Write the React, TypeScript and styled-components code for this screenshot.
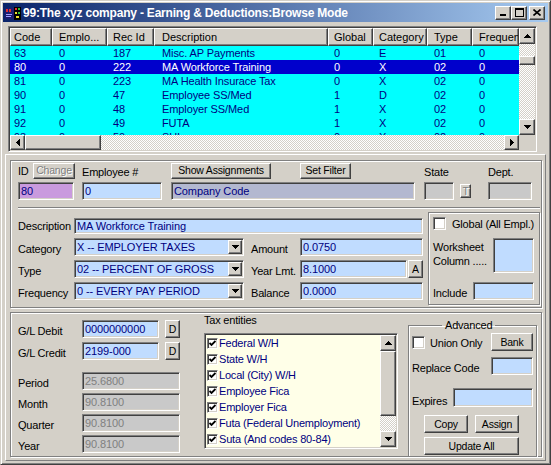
import styled, { createGlobalStyle, css } from "styled-components";

const FACE = "#d4d0c8";
const NAVY = "#000080";
const BLUE_FIELD = "#c0dcff";
const GREY_FIELD = "#c9c9c9";

const GlobalStyle = createGlobalStyle`
  html, body { margin: 0; padding: 0; background: #ffffff; }
  body { font-family: "Liberation Sans", Arial, sans-serif; font-size: 11px; color: #000; }
  *, *::before, *::after { box-sizing: border-box; }
`;

const raised = css`
  border: 1px solid;
  border-color: #ffffff #404040 #404040 #ffffff;
  box-shadow: inset -1px -1px #808080, inset 1px 1px ${FACE};
  background: ${FACE};
`;

const sunken = css`
  border: 1px solid;
  border-color: #808080 #ffffff #ffffff #808080;
  box-shadow: inset 1px 1px #404040, inset -1px -1px ${FACE};
`;

const etched = css`
  border: 1px solid #808080;
  box-shadow: inset 1px 1px #ffffff, 1px 1px #ffffff;
`;

const checker = css`
  background: repeating-conic-gradient(#ffffff 0 25%, ${FACE} 0 50%) 0 0 / 2px 2px;
`;

const Window = styled.div`
  width: 551px;
  height: 465px;
  background: ${FACE};
  border: 1px solid;
  border-color: ${FACE} #404040 #404040 ${FACE};
  box-shadow: inset 1px 1px #ffffff, inset -1px -1px #808080;
  padding: 2px;
  display: flex;
  flex-direction: column;
`;

const TitleBar = styled.div`
  height: 19px;
  flex-shrink: 0;
  background: linear-gradient(to right, #0a246a, #a6caf0);
  display: flex;
  align-items: center;
  padding: 0 3px 0 2px;
`;

const TitleText = styled.span`
  flex: 1;
  margin-left: 2px;
  color: #ffffff;
  font-weight: bold;
  font-size: 12px;
  letter-spacing: -0.2px;
  white-space: nowrap;
`;

const CaptionButton = styled.div<{ $ml?: number }>`
  ${raised}
  width: 16px;
  height: 14px;
  margin-left: ${(p) => p.$ml ?? 0}px;
  display: flex;
  align-items: center;
  justify-content: center;
`;

const GridFrame = styled.div`
  ${sunken}
  margin: 4px 0 0 5px;
  width: 529px;
  height: 126px;
  padding: 1px;
  display: grid;
  grid-template-columns: 509px 16px;
  grid-template-rows: 107px 15px;
`;

const Viewport = styled.div`
  overflow: hidden;
  background: #00ffff;
`;

const HeaderRow = styled.div`
  display: flex;
  height: 18px;
`;

const HeaderCell = styled.div<{ $w: number; $pad: number }>`
  ${raised}
  width: ${(p) => p.$w}px;
  flex-shrink: 0;
  padding-left: ${(p) => p.$pad - 1}px;
  line-height: 16px;
  font-size: 11px;
  white-space: nowrap;
  overflow: hidden;
`;

const DataRow = styled.div<{ $selected?: boolean }>`
  display: flex;
  height: 14px;
  background: ${(p) => (p.$selected ? "#0000cc" : "#00ffff")};
  color: ${(p) => (p.$selected ? "#ffffff" : NAVY)};
`;

const DataCell = styled.div<{ $w: number; $pad: number }>`
  width: ${(p) => p.$w}px;
  flex-shrink: 0;
  padding-left: ${(p) => p.$pad}px;
  line-height: 14px;
  font-size: 11px;
  letter-spacing: -0.1px;
  white-space: nowrap;
  overflow: hidden;
`;

const ScrollColumn = styled.div`
  display: flex;
  flex-direction: column;
`;

const ScrollRow = styled.div`
  display: flex;
`;

const ScrollButton = styled.div<{ $w: number; $h: number }>`
  ${raised}
  width: ${(p) => p.$w}px;
  height: ${(p) => p.$h}px;
  flex-shrink: 0;
  display: flex;
  align-items: center;
  justify-content: center;
`;

const Track = styled.div<{ $vertical?: boolean }>`
  ${checker}
  flex: 1;
  display: flex;
  flex-direction: ${(p) => (p.$vertical ? "column" : "row")};
`;

const Thumb = styled.div<{ $offset: number; $size: number; $vertical?: boolean }>`
  ${raised}
  flex-shrink: 0;
  ${(p) =>
    p.$vertical
      ? `margin-top: ${p.$offset}px; height: ${p.$size}px; width: 100%;`
      : `margin-left: ${p.$offset}px; width: ${p.$size}px; height: 100%;`}
`;

const Corner = styled.div`
  background: ${FACE};
`;

const FormArea = styled.div`
  margin: 2px 0 0 2px;
  width: 541px;
  height: 307px;
  border: 1px solid;
  border-color: #ffffff #808080 #808080 #ffffff;
  padding: 5px 0 0 4px;
`;

const Panel = styled.div<{ $h: number; $mt?: number }>`
  ${etched}
  width: 532px;
  height: ${(p) => p.$h}px;
  margin-top: ${(p) => p.$mt ?? 0}px;
  padding: 1px 0 0 7px;
`;

const BottomPanel = styled(Panel)`
  display: flex;
  align-items: flex-start;
  padding-top: 0;
`;

const TopRow = styled.div`
  display: flex;
  height: 38px;
`;

const Column = styled.div<{ $w: number; $ml?: number; $mt?: number }>`
  width: ${(p) => p.$w}px;
  margin-left: ${(p) => p.$ml ?? 0}px;
  margin-top: ${(p) => p.$mt ?? 0}px;
  flex-shrink: 0;
  display: flex;
  flex-direction: column;
`;

const ColumnHead = styled.div`
  height: 17px;
  margin-bottom: 3px;
  display: flex;
  align-items: center;
`;

const FieldRow = styled.div<{ $mt?: number; $h?: number }>`
  display: flex;
  align-items: center;
  margin-top: ${(p) => p.$mt ?? 0}px;
  height: ${(p) => p.$h ?? 18}px;
  flex-shrink: 0;
`;

const Label = styled.span<{ $w?: number; $ml?: number; $pt?: number; $top?: boolean }>`
  display: inline-block;
  flex-shrink: 0;
  align-self: ${(p) => (p.$top ? "flex-start" : "auto")};
  width: ${(p) => (p.$w ? `${p.$w}px` : "auto")};
  margin-left: ${(p) => p.$ml ?? 0}px;
  padding-top: ${(p) => p.$pt ?? 0}px;
  font-size: 11px;
  letter-spacing: -0.2px;
  line-height: 14px;
  white-space: nowrap;
`;

const Button = styled.button<{ $w: number; $h?: number; $ml?: number | "auto"; $disabled?: boolean }>`
  ${raised}
  width: ${(p) => p.$w}px;
  height: ${(p) => p.$h ?? 16}px;
  margin: 0 0 0 ${(p) => (p.$ml === "auto" ? "auto" : `${p.$ml ?? 0}px`)};
  padding: 0;
  flex-shrink: 0;
  font-family: inherit;
  font-size: 10.5px;
  letter-spacing: -0.2px;
  line-height: 1;
  color: ${(p) => (p.$disabled ? "#808080" : "#000000")};
  text-shadow: ${(p) => (p.$disabled ? "1px 1px #ffffff" : "none")};
  display: flex;
  align-items: center;
  justify-content: center;
  white-space: nowrap;
  cursor: default;
`;

const Field = styled.div<{ $w: number; $h?: number; $ml?: number | "auto"; $bg?: string; $fg?: string }>`
  ${sunken}
  width: ${(p) => p.$w}px;
  height: ${(p) => p.$h ?? 18}px;
  margin-left: ${(p) => (p.$ml === "auto" ? "auto" : `${p.$ml ?? 0}px`)};
  flex-shrink: 0;
  background: ${(p) => p.$bg ?? BLUE_FIELD};
  color: ${(p) => p.$fg ?? NAVY};
  padding: 0 2px;
  line-height: ${(p) => (p.$h ?? 18) - 2}px;
  font-size: 11px;
  letter-spacing: -0.1px;
  white-space: nowrap;
  overflow: hidden;
`;

const ComboBox = styled.div`
  ${sunken}
  width: 170px;
  height: 18px;
  flex-shrink: 0;
  background: ${BLUE_FIELD};
  padding: 1px;
  display: flex;
`;

const ComboText = styled.div`
  flex: 1;
  padding-left: 1px;
  color: ${NAVY};
  font-size: 11px;
  letter-spacing: -0.1px;
  line-height: 14px;
  white-space: nowrap;
  overflow: hidden;
`;

const DropButton = styled.div`
  ${raised}
  width: 14px;
  height: 14px;
  display: flex;
  align-items: center;
  justify-content: center;
`;

const Separator = styled.div`
  margin: 7px 1px 0 0;
  height: 2px;
  border-top: 1px solid #808080;
  border-bottom: 1px solid #ffffff;
`;

const LowerBlock = styled.div`
  display: flex;
  margin-top: 3px;
`;

const Form = styled.div`
  width: 405px;
  padding-top: 6px;
  display: flex;
  flex-direction: column;
  gap: 4px;
`;

const GlobalBox = styled.div`
  ${etched}
  width: 112px;
  height: 93px;
  margin-left: 5px;
  padding: 4px 5px 0 4px;
  display: flex;
  flex-direction: column;
`;

const CheckBox = styled.span<{ $size?: number }>`
  ${sunken}
  width: ${(p) => p.$size ?? 13}px;
  height: ${(p) => p.$size ?? 13}px;
  background: #ffffff;
  flex-shrink: 0;
  display: inline-flex;
  align-items: center;
  justify-content: center;
`;

const TaxLabel = styled.div`
  line-height: 13px;
  font-size: 11px;
  letter-spacing: -0.2px;
`;

const TaxList = styled.div`
  ${sunken}
  margin-top: 6px;
  width: 194px;
  height: 116px;
  background: #ffffe8;
  padding: 1px;
  display: flex;
`;

const TaxItems = styled.div`
  flex: 1;
  overflow: hidden;
`;

const TaxItem = styled.div`
  height: 16px;
  display: flex;
  align-items: center;
  padding-left: 1px;
  gap: 1px;
  color: ${NAVY};
  font-size: 11px;
  letter-spacing: -0.2px;
  white-space: nowrap;
`;

const Advanced = styled.fieldset`
  ${etched}
  margin: 6px 0 0 10px;
  padding: 0 3px 0 3px;
  width: 129px;
  height: 138px;
  min-width: 0;
  display: flex;
  flex-direction: column;
`;

const Legend = styled.legend`
  margin-left: 30px;
  padding: 0 3px;
  line-height: 13px;
  font-size: 11px;
  letter-spacing: -0.2px;
`;

type Dir = "up" | "down" | "left" | "right";

function Arrow({ dir }: { dir: Dir }) {
  const vertical = dir === "up" || dir === "down";
  const rects = [0, 1, 2, 3].map((i) => {
    const along = dir === "up" || dir === "left" ? i : 3 - i;
    return vertical
      ? { x: 3 - i, y: along, w: 2 * i + 1, h: 1 }
      : { x: along, y: 3 - i, w: 1, h: 2 * i + 1 };
  });
  return (
    <svg width={vertical ? 7 : 4} height={vertical ? 4 : 7} shapeRendering="crispEdges">
      {rects.map((r, i) => (
        <rect key={i} x={r.x} y={r.y} width={r.w} height={r.h} fill="#000" />
      ))}
    </svg>
  );
}

function CheckMark() {
  return (
    <svg width="7" height="7" viewBox="0 0 7 7">
      <path d="M0.5 3 L2.5 5 L6.5 1" stroke="#000" strokeWidth="1.8" fill="none" />
    </svg>
  );
}

function AppIcon() {
  return (
    <svg width="16" height="16" shapeRendering="crispEdges">
      <rect x="0" y="3" width="9" height="11" fill="#1c1c70" />
      <rect x="1" y="4" width="2" height="3" fill="#e03030" />
      <rect x="4" y="4" width="2" height="3" fill="#e03030" />
      <rect x="1" y="9" width="6" height="1" fill="#a0a0ff" />
      <rect x="1" y="11" width="5" height="1" fill="#a0a0ff" />
      <rect x="9" y="2" width="7" height="13" fill="#000" />
      <rect x="10" y="3" width="2" height="2" fill="#e03030" />
      <rect x="13" y="3" width="2" height="2" fill="#30c030" />
      <rect x="10" y="7" width="2" height="2" fill="#f0e030" />
      <rect x="13" y="7" width="2" height="2" fill="#30c030" />
      <rect x="11" y="11" width="3" height="2" fill="#f0e030" />
    </svg>
  );
}

const columns = [
  { title: "Code", width: 42, pad: 4 },
  { title: "Emplo...", width: 55, pad: 7 },
  { title: "Rec Id", width: 47, pad: 6 },
  { title: "Description", width: 174, pad: 8 },
  { title: "Global", width: 45, pad: 6 },
  { title: "Category", width: 54, pad: 6 },
  { title: "Type", width: 45, pad: 7 },
  { title: "Frequency", width: 47, pad: 7 },
];

const rows = [
  ["63", "0", "187", "Misc. AP Payments", "0", "E", "01", "0"],
  ["80", "0", "222", "MA Workforce Training", "0", "X", "02", "0"],
  ["81", "0", "223", "MA Health Insurace Tax", "0", "X", "02", "0"],
  ["90", "0", "47", "Employee SS/Med", "1", "D", "02", "0"],
  ["91", "0", "48", "Employer SS/Med", "1", "X", "02", "0"],
  ["92", "0", "49", "FUTA", "1", "X", "02", "0"],
  ["93", "0", "50", "SUI", "0", "X", "02", "0"],
];

const taxEntities = [
  "Federal W/H",
  "State W/H",
  "Local (City) W/H",
  "Employee Fica",
  "Employer Fica",
  "Futa (Federal Unemployment)",
  "Suta (And codes 80-84)",
];

const totals = [
  ["Period", "25.6800"],
  ["Month", "90.8100"],
  ["Quarter", "90.8100"],
  ["Year", "90.8100"],
];

function Combo({ value }: { value: string }) {
  return (
    <ComboBox>
      <ComboText>{value}</ComboText>
      <DropButton>
        <Arrow dir="down" />
      </DropButton>
    </ComboBox>
  );
}

function BrowseGrid() {
  return (
    <GridFrame>
      <Viewport>
        <HeaderRow>
          {columns.map((c) => (
            <HeaderCell key={c.title} $w={c.width} $pad={c.pad}>
              {c.title}
            </HeaderCell>
          ))}
        </HeaderRow>
        {rows.map((r, i) => (
          <DataRow key={r[0]} $selected={i === 1}>
            {r.map((v, j) => (
              <DataCell key={j} $w={columns[j].width} $pad={columns[j].pad}>
                {v}
              </DataCell>
            ))}
          </DataRow>
        ))}
      </Viewport>
      <ScrollColumn>
        <ScrollButton $w={16} $h={16}>
          <Arrow dir="up" />
        </ScrollButton>
        <Track $vertical>
          <Thumb $vertical $offset={12} $size={9} />
        </Track>
        <ScrollButton $w={16} $h={16}>
          <Arrow dir="down" />
        </ScrollButton>
      </ScrollColumn>
      <ScrollRow>
        <ScrollButton $w={15} $h={15}>
          <Arrow dir="left" />
        </ScrollButton>
        <Track>
          <Thumb $offset={0} $size={76} />
        </Track>
        <ScrollButton $w={15} $h={15}>
          <Arrow dir="right" />
        </ScrollButton>
      </ScrollRow>
      <Corner />
    </GridFrame>
  );
}

export default function App() {
  return (
    <>
      <GlobalStyle />
      <Window>
        <TitleBar>
          <AppIcon />
          <TitleText>99:The xyz company - Earning &amp; Deductions:Browse Mode</TitleText>
          <CaptionButton>
            <svg width="8" height="7" shapeRendering="crispEdges">
              <rect x="1" y="5" width="6" height="2" fill="#000" />
            </svg>
          </CaptionButton>
          <CaptionButton>
            <svg width="9" height="9" shapeRendering="crispEdges">
              <rect x="0.5" y="0.5" width="8" height="8" fill="none" stroke="#000" />
              <rect x="0" y="1" width="9" height="1" fill="#000" />
            </svg>
          </CaptionButton>
          <CaptionButton $ml={2}>
            <svg width="8" height="7">
              <path d="M0.5 0.5 L7.5 6.5 M7.5 0.5 L0.5 6.5" stroke="#000" strokeWidth="1.6" />
            </svg>
          </CaptionButton>
        </TitleBar>

        <BrowseGrid />

        <FormArea>
          <Panel $h={148}>
            <TopRow>
              <Column $w={57}>
                <ColumnHead>
                  <Label>ID</Label>
                  <Button $w={42} $ml="auto" $disabled>
                    Change
                  </Button>
                </ColumnHead>
                <Field $w={56} $bg="#c99ade">
                  80
                </Field>
              </Column>
              <Column $w={80} $ml={7}>
                <ColumnHead>
                  <Label $pt={3}>Employee #</Label>
                </ColumnHead>
                <Field $w={80}>0</Field>
              </Column>
              <Column $w={244} $ml={9}>
                <ColumnHead>
                  <Button $w={100}>Show Assignments</Button>
                  <Button $w={51} $ml={29}>
                    Set Filter
                  </Button>
                </ColumnHead>
                <Field $w={244} $bg="#b3b8d0">
                  Company Code
                </Field>
              </Column>
              <Column $w={46} $ml={9}>
                <ColumnHead>
                  <Label $pt={3}>State</Label>
                </ColumnHead>
                <FieldRow>
                  <Field $w={30} $bg={GREY_FIELD} />
                  <Button $w={11} $h={14} $ml={6} $disabled>
                    T
                  </Button>
                </FieldRow>
              </Column>
              <Column $w={44} $ml={18}>
                <ColumnHead>
                  <Label $pt={3}>Dept.</Label>
                </ColumnHead>
                <Field $w={44} $bg={GREY_FIELD} />
              </Column>
            </TopRow>

            <Separator />

            <LowerBlock>
              <Form>
                <FieldRow $h={16}>
                  <Label $w={56}>Description</Label>
                  <Field $w={349} $h={16}>
                    MA Workforce Training
                  </Field>
                </FieldRow>
                <FieldRow>
                  <Label $w={56} $pt={3}>
                    Category
                  </Label>
                  <Combo value="X -- EMPLOYER TAXES" />
                  <Label $w={49} $ml={7} $pt={3}>
                    Amount
                  </Label>
                  <Field $w={123}>0.0750</Field>
                </FieldRow>
                <FieldRow>
                  <Label $w={56} $pt={3}>
                    Type
                  </Label>
                  <Combo value="02 -- PERCENT OF GROSS" />
                  <Label $w={49} $ml={7} $pt={3}>
                    Year Lmt.
                  </Label>
                  <Field $w={107}>8.1000</Field>
                  <Button $w={15} $h={18} $ml={1}>
                    A
                  </Button>
                </FieldRow>
                <FieldRow>
                  <Label $w={56} $pt={3}>
                    Frequency
                  </Label>
                  <Combo value="0 -- EVERY PAY PERIOD" />
                  <Label $w={49} $ml={7} $pt={3}>
                    Balance
                  </Label>
                  <Field $w={123}>0.0000</Field>
                </FieldRow>
              </Form>

              <GlobalBox>
                <FieldRow $h={13}>
                  <CheckBox />
                  <Label $ml={6}>Global (All Empl.)</Label>
                </FieldRow>
                <FieldRow $mt={8} $h={35}>
                  <Label $pt={2} $top>
                    Worksheet
                    <br />
                    Column .....
                  </Label>
                  <Field $w={41} $h={35} $ml="auto" />
                </FieldRow>
                <FieldRow $mt={9}>
                  <Label $pt={4}>Include</Label>
                  <Field $w={61} $ml="auto" />
                </FieldRow>
              </GlobalBox>
            </LowerBlock>
          </Panel>

          <BottomPanel $h={145} $mt={4}>
            <Column $w={162} $mt={7}>
              <FieldRow>
                <Label $w={64} $pt={4}>
                  G/L Debit
                </Label>
                <Field $w={77}>0000000000</Field>
                <Button $w={15} $h={18} $ml={6}>
                  D
                </Button>
              </FieldRow>
              <FieldRow $mt={4}>
                <Label $w={64} $pt={4}>
                  G/L Credit
                </Label>
                <Field $w={77}>2199-000</Field>
                <Button $w={15} $h={18} $ml={6}>
                  D
                </Button>
              </FieldRow>
              {totals.map(([name, value], i) => (
                <FieldRow key={name} $mt={i === 0 ? 12 : 3}>
                  <Label $w={64} $pt={4}>
                    {name}
                  </Label>
                  <Field $w={98} $bg={GREY_FIELD} $fg="#808080">
                    {value}
                  </Field>
                </FieldRow>
              ))}
            </Column>

            <Column $w={194} $ml={24} $mt={1}>
              <TaxLabel>Tax entities</TaxLabel>
              <TaxList>
                <TaxItems>
                  {taxEntities.map((t) => (
                    <TaxItem key={t}>
                      <CheckBox $size={11}>
                        <CheckMark />
                      </CheckBox>
                      {t}
                    </TaxItem>
                  ))}
                </TaxItems>
                <ScrollColumn>
                  <ScrollButton $w={16} $h={16}>
                    <Arrow dir="up" />
                  </ScrollButton>
                  <Track $vertical>
                    <Thumb $vertical $offset={0} $size={65} />
                  </Track>
                  <ScrollButton $w={16} $h={16}>
                    <Arrow dir="down" />
                  </ScrollButton>
                </ScrollColumn>
              </TaxList>
            </Column>

            <Advanced>
              <Legend>Advanced</Legend>
              <FieldRow $mt={1}>
                <CheckBox />
                <Label $ml={5} $pt={2}>
                  Union Only
                </Label>
                <Button $w={42} $h={18} $ml="auto">
                  Bank
                </Button>
              </FieldRow>
              <FieldRow $mt={6}>
                <Label $pt={4}>Replace Code</Label>
                <Field $w={42} $ml="auto" />
              </FieldRow>
              <FieldRow $mt={13} $h={19}>
                <Label $pt={6}>Expires</Label>
                <Field $w={80} $h={19} $ml="auto" />
              </FieldRow>
              <FieldRow $mt={8}>
                <Button $w={44} $h={18} $ml={12}>
                  Copy
                </Button>
                <Button $w={44} $h={18} $ml={7}>
                  Assign
                </Button>
              </FieldRow>
              <FieldRow $mt={4}>
                <Button $w={95} $h={18} $ml={12}>
                  Update All
                </Button>
              </FieldRow>
            </Advanced>
          </BottomPanel>
        </FormArea>
      </Window>
    </>
  );
}
